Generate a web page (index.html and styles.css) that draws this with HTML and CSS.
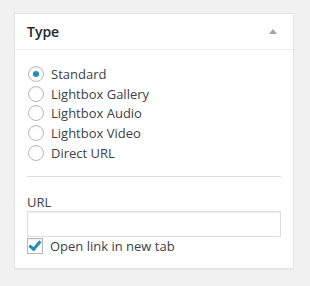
FILE: index.html
```html
<!DOCTYPE html>
<html lang="en">
  <head>
    <meta charset="UTF-8" />
    <title>Type</title>
    <link rel="stylesheet" href="styles.css">
  </head>
  <body>
    <div class="postbox">
      <div class="postbox-header">
        <h2>Type</h2>
        <span class="toggle-arrow"></span>
      </div>

      <div class="inside">
        <!-- format choices -->
        <ul class="format-list">
          <li><label><input type="radio" name="format" checked /> <span>Standard</span></label></li>
          <li><label><input type="radio" name="format" /> <span>Lightbox Gallery</span></label></li>
          <li><label><input type="radio" name="format" /> <span>Lightbox Audio</span></label></li>
          <li><label><input type="radio" name="format" /> <span>Lightbox Video</span></label></li>
          <li><label><input type="radio" name="format" /> <span>Direct URL</span></label></li>
        </ul>

        <div class="url-field">
          <label for="url" class="field-label">URL</label>
          <input type="text" id="url" class="url-input" />
          <label class="check-row">
            <input type="checkbox" checked />
            <span>Open link in new tab</span>
          </label>
        </div>
      </div>
    </div>
  </body>
</html>
```

FILE: styles.css
```css
body {
  margin: 0;
  padding: 13px 16px 17px 14px;
  background: #f1f1f1;
  font-family: "Open Sans", "Liberation Sans", sans-serif;
  font-size: 13px;
  color: #3c4146;
}
.postbox {
  background: #fff;
  border: 1px solid #e5e5e5;
  box-shadow: 0 1px 1px rgba(0, 0, 0, 0.04);
  height: 254px;
}
.postbox-header {
  display: flex;
  align-items: center;
  justify-content: space-between;
  height: 35px;
  padding: 0 12px;
  border-bottom: 1px solid #eee;
}
.postbox-header h2 {
  margin: 0;
  font-size: 14px;
  font-weight: 600;
  color: #23282d;
}
.toggle-arrow {
  width: 0;
  height: 0;
  margin-right: 4px;
  border-left: 4px solid transparent;
  border-right: 4px solid transparent;
  border-bottom: 5px solid #a0a5aa;
}
.inside {
  padding: 14px 12px 0;
}
.format-list {
  list-style: none;
  margin: 0;
  padding: 0 0 14px;
  border-bottom: 1px solid #ddd;
}
.format-list li {
  height: 19.7px;
}
.format-list label,
.check-row {
  display: flex;
  align-items: center;
  gap: 7px;
  height: 100%;
}
input[type="radio"],
input[type="checkbox"] {
  appearance: none;
  margin: 0 0 0 1px;
  width: 16px;
  height: 16px;
  border: 1px solid #b4b9be;
  background: #fff;
  box-shadow: inset 0 1px 2px rgba(0, 0, 0, 0.07);
  display: flex;
  align-items: center;
  justify-content: center;
}
input[type="radio"] {
  border-radius: 50%;
}
input[type="radio"]:checked::before {
  content: "";
  width: 6px;
  height: 6px;
  border-radius: 50%;
  background: #1e8cbe;
}
input[type="checkbox"] {
  margin-left: 0;
}
input[type="checkbox"]:checked::before {
  content: "";
  width: 9px;
  height: 4px;
  margin-top: -3px;
  border-left: 3px solid #1e8cbe;
  border-bottom: 3px solid #1e8cbe;
  transform: rotate(-50deg);
}
.url-field {
  padding-top: 16px;
}
.field-label {
  display: block;
  line-height: 18px;
}
.url-input {
  display: block;
  box-sizing: border-box;
  width: 100%;
  height: 26px;
  margin: 0;
  border: 1px solid #ddd;
  box-shadow: inset 0 1px 2px rgba(0, 0, 0, 0.07);
}
.check-row {
  height: 18px;
  margin-top: 0;
}
```
